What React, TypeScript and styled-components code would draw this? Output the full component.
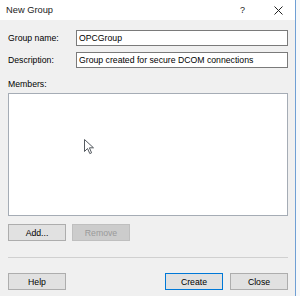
import styled, { createGlobalStyle } from "styled-components";

// colors
const windowBg = "#f0f0f0";
const white = "#ffffff";
const textColor = "#000000";
const fieldBorder = "#7a7a7a";
const listBorder = "#a5acb5";
const buttonBg = "#e1e1e1";
const buttonBorder = "#adadad";
const focusBlue = "#0078d7";

const GlobalStyle = createGlobalStyle`
  html, body {
    margin: 0;
    padding: 0;
    background: #f6f8fa;
  }
  body {
    font-family: "Liberation Sans", Arial, sans-serif;
    width: 300px;
    height: 296px;
    overflow: hidden;
  }
`;

const Cursor = () => (
  <CursorIcon width="11" height="16" viewBox="0 0 11 16">
    <path
      d="M0.5 0.5 L0.5 12.5 L3.5 9.5 L5.8 14.6 L7.6 13.8 L5.4 8.8 L9.5 8.8 Z"
      fill={white}
      stroke="#555a60"
      strokeWidth="1"
      strokeLinejoin="round"
    />
  </CursorIcon>
);

const CloseGlyph = () => (
  <svg width="9" height="9" viewBox="0 0 9 9">
    <path d="M0.5 0.5 L8.5 8.5 M8.5 0.5 L0.5 8.5" stroke="#222" strokeWidth="1" />
  </svg>
);

const App = () => {
  return (
    <>
      <GlobalStyle />
      <Dialog>
        <TitleBar>
          <Title>New Group</Title>
          <TitleButtons>
            <HelpMark>?</HelpMark>
            <CloseGlyph />
          </TitleButtons>
        </TitleBar>
        <Body>
          <Fields>
            <Label>Group name:</Label>
            <TextBox>OPCGroup</TextBox>
            <Label>Description:</Label>
            <TextBox>Group created for secure DCOM connections</TextBox>
          </Fields>
          <MembersLabel>Members:</MembersLabel>
          <ListBox>
            <Cursor />
          </ListBox>
          <ButtonRow>
            <Button>Add...</Button>
            <Button disabled>Remove</Button>
          </ButtonRow>
          <Separator />
          <FooterRow>
            <Button>Help</Button>
            <Spacer />
            <Button $primary>Create</Button>
            <Button>Close</Button>
          </FooterRow>
        </Body>
      </Dialog>
    </>
  );
};

const Dialog = styled.div`
  width: 295px;
  height: 296px;
  background: ${windowBg};
  border-right: 1px solid #6f9fd4;
  display: flex;
  flex-direction: column;
  color: ${textColor};
`;

const TitleBar = styled.div`
  height: 20px;
  background: ${white};
  display: flex;
  align-items: center;
  padding: 0 12px 0 6px;
`;

const Title = styled.div`
  font-size: 9.3px;
  color: #222;
`;

const TitleButtons = styled.div`
  margin-left: auto;
  display: flex;
  align-items: center;
  gap: 29px;
`;

const HelpMark = styled.span`
  font-size: 9px;
  color: #222;
`;

const Body = styled.div`
  display: flex;
  flex-direction: column;
  padding: 10px 7px 0 8px;
`;

const Fields = styled.div`
  display: grid;
  grid-template-columns: 68px 1fr;
  row-gap: 6px;
  align-items: center;
`;

const Label = styled.div`
  font-size: 8.7px;
  line-height: 10px;
`;

const TextBox = styled.div`
  height: 16px;
  box-sizing: border-box;
  border: 1px solid ${fieldBorder};
  background: ${white};
  font-size: 8.7px;
  line-height: 14px;
  padding: 0 2px;
  white-space: nowrap;
  overflow: hidden;
`;

const MembersLabel = styled(Label)`
  margin-top: 11px;
`;

const ListBox = styled.div`
  position: relative;
  margin-top: 4px;
  height: 123px;
  box-sizing: border-box;
  border: 1px solid ${listBorder};
  background: ${white};
`;

const CursorIcon = styled.svg`
  position: absolute;
  left: 75px;
  top: 45px;
`;

const ButtonRow = styled.div`
  display: flex;
  gap: 6px;
  margin-top: 8px;
`;

const Button = styled.button<{ $primary?: boolean }>`
  width: 58px;
  height: 17px;
  box-sizing: border-box;
  margin: 0;
  padding: 0;
  font-family: "Liberation Sans", Arial, sans-serif;
  font-size: 8.7px;
  color: ${textColor};
  background: ${buttonBg};
  border: 1px solid ${(p) => (p.$primary ? focusBlue : buttonBorder)};
  &:disabled {
    background: #cccccc;
    border-color: #bfbfbf;
    color: #9a9a9a;
  }
`;

const Separator = styled.div`
  height: 1px;
  background: #d0d0d0;
  margin-top: 16px;
`;

const FooterRow = styled.div`
  display: flex;
  gap: 7px;
  margin-top: 15px;
`;

const Spacer = styled.div`
  flex: 1;
`;

export default App;
